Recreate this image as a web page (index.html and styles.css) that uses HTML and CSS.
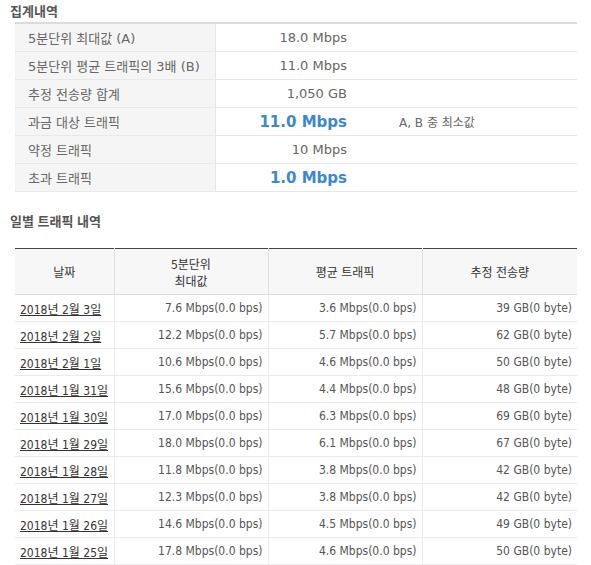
FILE: index.html
```html
<!DOCTYPE html>
<html lang="ko">
<head>
<meta charset="utf-8">
<link rel="stylesheet" href="styles.css">
</head>
<body>
<div class="page">
  <h3 class="title">집계내역</h3>
  <table class="summary">
    <colgroup><col class="c1"><col class="c2"><col class="c3"></colgroup>
    <tr><th>5분단위 최대값 (A)</th><td class="val">18.0 Mbps</td><td></td></tr>
    <tr><th>5분단위 평균 트래픽의 3배 (B)</th><td class="val">11.0 Mbps</td><td></td></tr>
    <tr><th>추정 전송량 합계</th><td class="val">1,050 GB</td><td></td></tr>
    <tr><th>과금 대상 트래픽</th><td class="val strong">11.0 Mbps</td><td class="note">A, B 중 최소값</td></tr>
    <tr><th>약정 트래픽</th><td class="val">10 Mbps</td><td></td></tr>
    <tr><th>초과 트래픽</th><td class="val strong">1.0 Mbps</td><td></td></tr>
  </table>

  <h3 class="title title2">일별 트래픽 내역</h3>
  <table class="daily">
    <colgroup><col class="d1"><col class="d2"><col class="d3"><col class="d4"></colgroup>
    <thead>
      <tr><th>날짜</th><th>5분단위<br>최대값</th><th>평균 트래픽</th><th>추정 전송량</th></tr>
    </thead>
    <tbody>
      <tr><td class="date"><a href="#">2018년 2월 3일</a></td><td>7.6 Mbps(0.0 bps)</td><td>3.6 Mbps(0.0 bps)</td><td>39 GB(0 byte)</td></tr>
      <tr><td class="date"><a href="#">2018년 2월 2일</a></td><td>12.2 Mbps(0.0 bps)</td><td>5.7 Mbps(0.0 bps)</td><td>62 GB(0 byte)</td></tr>
      <tr><td class="date"><a href="#">2018년 2월 1일</a></td><td>10.6 Mbps(0.0 bps)</td><td>4.6 Mbps(0.0 bps)</td><td>50 GB(0 byte)</td></tr>
      <tr><td class="date"><a href="#">2018년 1월 31일</a></td><td>15.6 Mbps(0.0 bps)</td><td>4.4 Mbps(0.0 bps)</td><td>48 GB(0 byte)</td></tr>
      <tr><td class="date"><a href="#">2018년 1월 30일</a></td><td>17.0 Mbps(0.0 bps)</td><td>6.3 Mbps(0.0 bps)</td><td>69 GB(0 byte)</td></tr>
      <tr><td class="date"><a href="#">2018년 1월 29일</a></td><td>18.0 Mbps(0.0 bps)</td><td>6.1 Mbps(0.0 bps)</td><td>67 GB(0 byte)</td></tr>
      <tr><td class="date"><a href="#">2018년 1월 28일</a></td><td>11.8 Mbps(0.0 bps)</td><td>3.8 Mbps(0.0 bps)</td><td>42 GB(0 byte)</td></tr>
      <tr><td class="date"><a href="#">2018년 1월 27일</a></td><td>12.3 Mbps(0.0 bps)</td><td>3.8 Mbps(0.0 bps)</td><td>42 GB(0 byte)</td></tr>
      <tr><td class="date"><a href="#">2018년 1월 26일</a></td><td>14.6 Mbps(0.0 bps)</td><td>4.5 Mbps(0.0 bps)</td><td>49 GB(0 byte)</td></tr>
      <tr><td class="date"><a href="#">2018년 1월 25일</a></td><td>17.8 Mbps(0.0 bps)</td><td>4.6 Mbps(0.0 bps)</td><td>50 GB(0 byte)</td></tr>
    </tbody>
  </table>
</div>
</body>
</html>
```

FILE: styles.css
```css
html, body {
  margin: 0;
  padding: 0;
  background: #fff;
}
body {
  font-family: "DejaVu Sans", "Noto Sans CJK KR", sans-serif;
  color: #555;
}
.page {
  padding: 4px 14px 0 10px;
  width: 567px;
}
.title {
  margin: 0;
  font-family: "Noto Sans CJK KR", sans-serif;
  font-size: 13px;
  line-height: 14px;
  font-weight: bold;
  color: #555;
  height: 18px;
}
.title2 {
  margin-top: 22px;
  height: 34px;
  padding-top: 0;
}
table {
  border-collapse: collapse;
  margin-left: 5px;
  width: 562px;
  table-layout: fixed;
}
.summary {
  border-top: 2px solid #dcdcdc;
}
.summary .c1 { width: 200px; }
.summary .c2 { width: 132px; }
.summary th,
.summary td {
  height: 27px;
  padding: 0;
  border-bottom: 1px solid #e8e8e8;
  font-size: 13px;
  font-weight: normal;
  color: #666;
  vertical-align: middle;
}
.summary th {
  background: #f5f5f5;
  text-align: left;
  padding-left: 13px;
  border-right: 1px solid #e8e8e8;
  font-family: "DejaVu Sans", "Noto Sans CJK KR", sans-serif;
}
.summary .val {
  text-align: right;
  white-space: nowrap;
}
.summary .strong {
  font-size: 15px;
  font-weight: bold;
  color: #3d88cc;
}
.summary .note {
  padding-left: 52px;
  font-size: 12px;
  color: #666;
}
.daily {
  border-top: 1px solid #444;
}
.daily .d1 { width: 99px; }
.daily .d2 { width: 154px; }
.daily .d3 { width: 154px; }
.daily th {
  height: 45px;
  padding: 0;
  background: #f7f7f7;
  font-family: "Noto Sans CJK KR", sans-serif;
  font-size: 12px;
  line-height: 17px;
  font-weight: normal;
  color: #333;
  border-right: 1px solid #e0e0e0;
  border-bottom: 1px solid #dcdce4;
}
.daily th:last-child { border-right: none; }
.daily td {
  height: 26px;
  padding: 0 5px 0 5px;
  font-family: "DejaVu Sans Condensed", "DejaVu Sans", "Noto Sans CJK KR", sans-serif;
  font-size: 12px;
  color: #555;
  text-align: right;
  white-space: nowrap;
  border-bottom: 1px solid #ebebeb;
  border-right: 1px solid #ebebeb;
}
.daily td:last-child { border-right: none; }
.daily td.date {
  text-align: left;
}
.daily a {
  color: #333;
  text-decoration: underline;
}
```
